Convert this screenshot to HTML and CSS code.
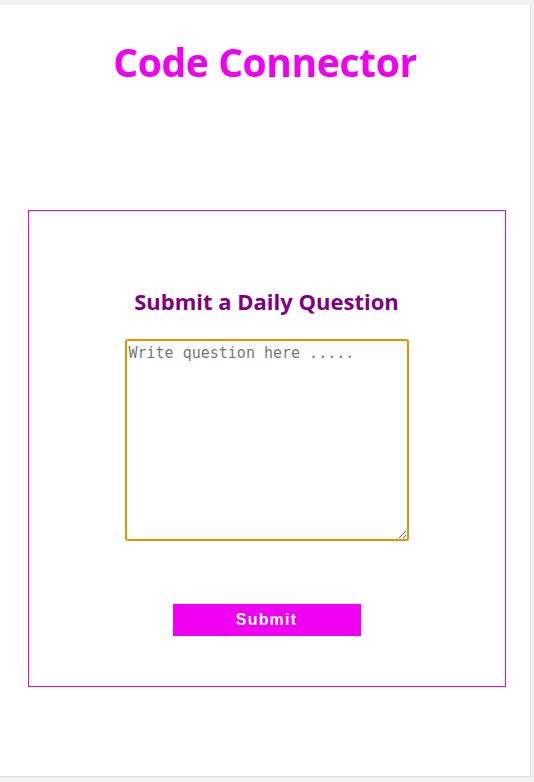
FILE: index.html
```html
<!DOCTYPE html>
<html>
<head>
<meta charset="utf-8">
<link rel="stylesheet" href="styles.css">
</head>
<body>
<div class="card">
  <h1 class="title">Code Connector</h1>
  <div class="box">
    <h2 class="subtitle">Submit a Daily Question</h2>
    <textarea class="question" placeholder="Write question here ....."></textarea>
    <button class="submit">Submit</button>
  </div>
</div>
</body>
</html>
```
FILE: styles.css
```css
html, body {
  margin: 0;
  padding: 0;
  background: #f2f2f2;
}
.card {
  margin-top: 5px;
  width: 531px;
  height: 772px;
  background: #ffffff;
  border-right: 1px solid #e6e6e6;
  border-bottom: 1px solid #dcdcdc;
  box-sizing: border-box;
  display: flex;
  flex-direction: column;
  align-items: center;
  font-family: "Open Sans", "Noto Sans", sans-serif;
}
.title {
  margin: 34px 0 0 0;
  height: 46px;
  line-height: 46px;
  font-size: 39px;
  font-weight: 700;
  color: #f000f0;
  letter-spacing: -0.4px;
}
.box {
  margin-top: 125px;
  margin-left: 3px;
  width: 478px;
  height: 477px;
  box-sizing: border-box;
  border: 1px solid #f000f0;
  display: flex;
  flex-direction: column;
  align-items: center;
}
.subtitle {
  margin: 75px 0 0 0;
  height: 30px;
  line-height: 30px;
  font-size: 22px;
  font-weight: 700;
  color: #800080;
}
.question {
  margin-top: 23px;
  width: 284px;
  height: 202px;
  box-sizing: border-box;
  border: 2px solid #e09400;
  border-radius: 3px;
  padding: 3px 2px;
  font-family: "DejaVu Sans Mono", monospace;
  font-size: 15px;
  line-height: 18px;
  outline: none;
  resize: both;
}
.question::placeholder {
  color: #777777;
}
.submit {
  margin-top: 63px;
  width: 188px;
  height: 32px;
  border: none;
  background: #f000f0;
  color: #ffffff;
  font-family: "Liberation Sans", Arial, sans-serif;
  font-weight: 700;
  font-size: 16px;
  letter-spacing: 1.2px;
  padding: 0;
}
```
